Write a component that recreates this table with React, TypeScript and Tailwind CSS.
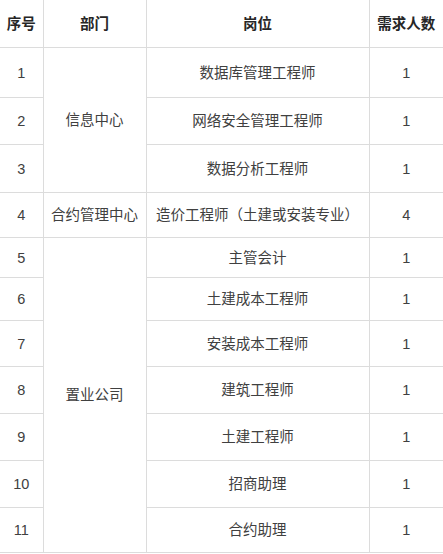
const rows = [
  { no: "1", dept: "信息中心", span: 3, post: "数据库管理工程师", count: "1", h: "h-[50px]" },
  { no: "2", post: "网络安全管理工程师", count: "1", h: "h-[47px]" },
  { no: "3", post: "数据分析工程师", count: "1", h: "h-[48px]" },
  { no: "4", dept: "合约管理中心", span: 1, post: "造价工程师（土建或安装专业）", count: "4", h: "h-[45px]" },
  { no: "5", dept: "置业公司", span: 7, post: "主管会计", count: "1", h: "h-[40px]" },
  { no: "6", post: "土建成本工程师", count: "1", h: "h-[43px]" },
  { no: "7", post: "安装成本工程师", count: "1", h: "h-[46px]" },
  { no: "8", post: "建筑工程师", count: "1", h: "h-[47px]" },
  { no: "9", post: "土建工程师", count: "1", h: "h-[47px]" },
  { no: "10", post: "招商助理", count: "1", h: "h-[47px]" },
  { no: "11", post: "合约助理", count: "1", h: "h-[45px]" },
];

const cell = "border-b border-l border-[#dcdcdc] text-center align-middle px-0 pt-[3px] pb-0";

export default function App() {
  return (
    <div className="w-[443px] h-[554px] bg-white font-['Liberation_Sans','Noto_Sans_CJK_SC',sans-serif] text-[14.5px] text-[#404040]">
      <table className="w-[443px] table-fixed border-collapse">
        <colgroup>
          <col className="w-[43px]" />
          <col className="w-[103px]" />
          <col className="w-[223px]" />
          <col className="w-[74px]" />
        </colgroup>
        <thead>
          <tr className="h-[47px] font-bold text-[#262626]">
            <th className={`${cell} border-l-0`}>序号</th>
            <th className={cell}>部门</th>
            <th className={cell}>岗位</th>
            <th className={cell}>需求人数</th>
          </tr>
        </thead>
        <tbody>
          {rows.map((r) => (
            <tr key={r.no} className={r.h}>
              <td className={`${cell} border-l-0`}>{r.no}</td>
              {r.dept && (
                <td className={cell} rowSpan={r.span}>
                  {r.dept}
                </td>
              )}
              <td className={cell}>{r.post}</td>
              <td className={cell}>{r.count}</td>
            </tr>
          ))}
        </tbody>
      </table>
    </div>
  );
}
